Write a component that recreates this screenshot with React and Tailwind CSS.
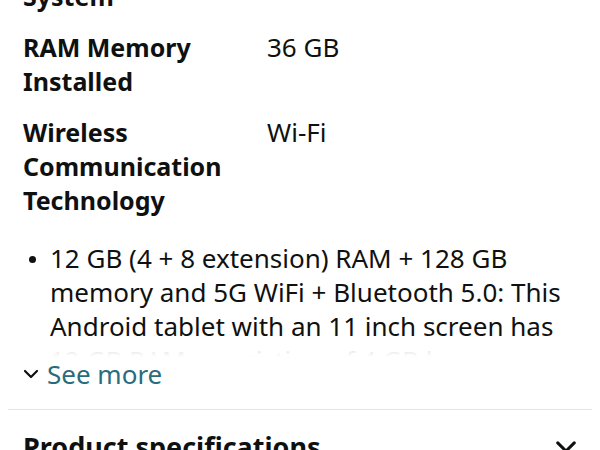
const specs = [
  { label: "Operating System", value: "Android 12" },
  { label: "RAM Memory Installed", value: "36 GB" },
  { label: "Wireless Communication Technology", value: "Wi-Fi" },
];

function Chevron({ className }) {
  return (
    <svg viewBox="0 0 16 10" fill="none" className={className}>
      <path
        d="M2 2 L8 8 L14 2"
        stroke="currentColor"
        strokeWidth="2.2"
        strokeLinecap="round"
        strokeLinejoin="round"
      />
    </svg>
  );
}

export default function App() {
  return (
    <div
      className="h-[450px] w-[600px] overflow-hidden bg-white text-[#0f1111]"
      style={{ fontFamily: '"Noto Sans", "Open Sans", sans-serif' }}
    >
      <div className="-mt-[55px] px-[23px] text-[26px] leading-[34px]">
        <div className="flex flex-col gap-[17px]">
          {specs.map((s) => (
            <div key={s.label} className="grid grid-cols-[244px_1fr]">
              <div className="pr-[30px] text-[25px] font-bold">{s.label}</div>
              <div>{s.value}</div>
            </div>
          ))}
        </div>

        <div className="relative mt-[24px] h-[116px] overflow-hidden">
          <ul className="pl-[27px]">
            <li className="relative">
              <span className="absolute -left-[21px] top-[15px] h-[7px] w-[7px] rounded-full bg-[#0f1111]" />
              12 GB (4 + 8 extension) RAM + 128 GB memory and 5G WiFi +
              Bluetooth 5.0: This Android tablet with an 11 inch screen has 12
              GB RAM, consisting of 4 GB base memory and 8 GB extension
            </li>
          </ul>
          <div className="absolute inset-x-0 bottom-0 h-[20px] bg-gradient-to-b from-white/70 to-white" />
        </div>

        <div className="flex items-center gap-[8px]">
          <Chevron className="h-[10px] w-[16px] text-[#0f1111]" />
          <span className="text-[#2a6b7c]">See more</span>
        </div>
      </div>

      <div className="mx-[8px] mt-[18px] h-px bg-[#e3e6e6]" />

      <div className="flex items-start justify-between px-[23px] pt-[20px]">
        <span className="text-[27px] font-bold leading-[34px]">
          Product specifications
        </span>
        <Chevron className="mt-[10px] h-[14px] w-[22px] text-[#0f1111]" />
      </div>
    </div>
  );
}
